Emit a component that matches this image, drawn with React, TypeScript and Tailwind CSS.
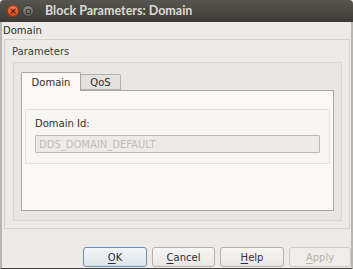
export default function App() {
  const ui = { fontFamily: '"DejaVu Sans", sans-serif' };

  return (
    <div
      className="w-[353px] h-[269px] overflow-hidden bg-[#edebe8] text-[10px] text-[#3c3c3c] flex flex-col"
      style={ui}
    >
      {/* title bar */}
      <div className="h-[22px] shrink-0 flex items-center bg-gradient-to-b from-[#57554f] to-[#3c3b37] rounded-t-[4px]">
        <div className="ml-[7px] size-[12px] rounded-full bg-gradient-to-b from-[#f37e54] to-[#d9451a] border border-[#9c3512] flex items-center justify-center">
          <span className="text-[9px] leading-none font-bold text-[#4a1a08]">×</span>
        </div>
        <div className="ml-[3px] size-[12px] rounded-full bg-gradient-to-b from-[#8e8c86] to-[#62605b] border border-[#3a3935] flex items-center justify-center">
          <div className="size-[5px] rounded-[1px] border border-[#3a3935]" />
        </div>
        <span
          className="ml-[11px] text-[12.5px] font-bold text-[#dfdbd2]"
          style={{ fontFamily: '"Lato", "DejaVu Sans", sans-serif' }}
        >
          Block Parameters: Domain
        </span>
      </div>

      {/* body */}
      <div className="flex-1 flex flex-col border-l-2 border-r-2 border-b border-[#b9b6b1] border-b-[#3f3e3a]">
        <div className="h-[17px] pl-[1px] flex items-center text-[#2e2e2e]">Domain</div>

        <div className="ml-[2px] mr-[1px] h-[190px] border border-[#d6d3ce] flex flex-col">
          <div className="h-[22px] pl-[7px] flex items-center">Parameters</div>

          <div className="ml-[8px] mr-[7px] flex-1 mb-[7px] border border-[#d9d6d1] bg-[#e9e7e3] flex flex-col pl-[7px] pr-[7px] pt-[8px] pb-[9px]">
            {/* tabs */}
            <div className="flex items-end h-[19px]">
              <div className="w-[60px] h-[19px] -mb-px z-10 bg-[#fbf9f6] border border-[#aaa7a2] border-b-0 rounded-t-[2px] flex items-center justify-center text-[#2e2e2e]">
                Domain
              </div>
              <div className="w-[40px] h-[16px] bg-[#e4e2de] border border-l-0 border-[#b5b2ad] rounded-tr-[2px] flex items-center justify-center text-[#2e2e2e]">
                QoS
              </div>
            </div>

            {/* pane */}
            <div className="flex-1 bg-[#fbf9f6] border border-[#aaa7a2] pl-[3px] pr-[3px] pt-[18px]">
              <div className="h-[55px] border border-[#e6e3df] bg-[#f8f6f3] pl-[9px] pr-[9px] flex flex-col">
                <div className="h-[25px] flex items-end pb-[4px] text-[#2e2e2e]">Domain Id:</div>
                <div className="h-[18px] border border-[#bcb9b4] bg-[#edebe8] rounded-[1px] flex items-center pl-[3px] text-[#bfbdb9]">
                  DDS_DOMAIN_DEFAULT
                </div>
              </div>
            </div>
          </div>
        </div>

        {/* buttons */}
        <div className="flex-1 flex items-end pb-[1px] pl-[81px] gap-[5px]">
          <button className="w-[64px] h-[20px] rounded-[3px] border border-[#6d8fb3] bg-gradient-to-b from-[#f3f5f7] to-[#dfe5ea] text-[#2e2e2e]">
            <span className="underline underline-offset-2">O</span>K
          </button>
          <button className="w-[63px] h-[20px] rounded-[3px] border border-[#b3b0ab] bg-gradient-to-b from-[#f7f6f5] to-[#e9e7e4] text-[#2e2e2e]">
            <span className="underline underline-offset-2">C</span>ancel
          </button>
          <button className="w-[64px] h-[20px] rounded-[3px] border border-[#b3b0ab] bg-gradient-to-b from-[#f7f6f5] to-[#e9e7e4] text-[#2e2e2e]">
            <span className="underline underline-offset-2">H</span>elp
          </button>
          <button className="w-[62px] h-[20px] rounded-[3px] border border-[#cfccc7] bg-[#efedea] text-[#b4b2ae]">
            <span className="underline underline-offset-2">A</span>pply
          </button>
        </div>
      </div>
    </div>
  );
}
